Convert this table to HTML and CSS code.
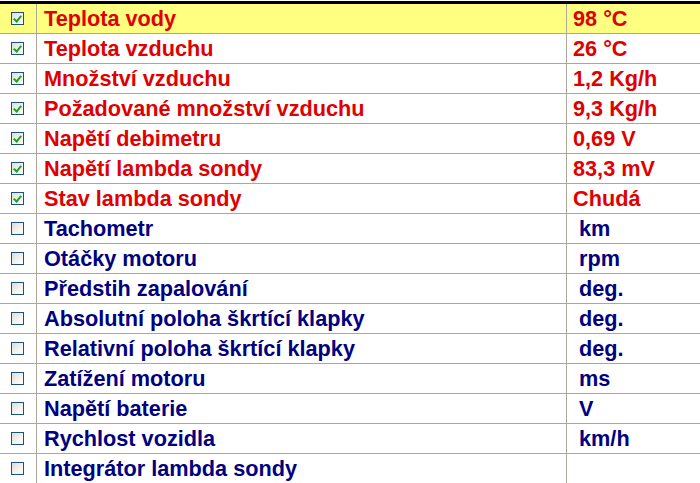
FILE: index.html
```html
<!DOCTYPE html>
<html>
<head>
<meta charset="utf-8">
<link rel="stylesheet" href="styles.css">
</head>
<body>
<div class="wrap">
<table class="grid">
  <tr class="row sel on"><td class="cb"><span class="box chk"></span></td><td class="name">Teplota vody</td><td class="val">98 °C</td></tr>
  <tr class="row on"><td class="cb"><span class="box chk"></span></td><td class="name">Teplota vzduchu</td><td class="val">26 °C</td></tr>
  <tr class="row on"><td class="cb"><span class="box chk"></span></td><td class="name">Množství vzduchu</td><td class="val">1,2 Kg/h</td></tr>
  <tr class="row on"><td class="cb"><span class="box chk"></span></td><td class="name">Požadované množství vzduchu</td><td class="val">9,3 Kg/h</td></tr>
  <tr class="row on"><td class="cb"><span class="box chk"></span></td><td class="name">Napětí debimetru</td><td class="val">0,69 V</td></tr>
  <tr class="row on"><td class="cb"><span class="box chk"></span></td><td class="name">Napětí lambda sondy</td><td class="val">83,3 mV</td></tr>
  <tr class="row on"><td class="cb"><span class="box chk"></span></td><td class="name">Stav lambda sondy</td><td class="val">Chudá</td></tr>
  <tr class="row off"><td class="cb"><span class="box"></span></td><td class="name">Tachometr</td><td class="val">&nbsp;km</td></tr>
  <tr class="row off"><td class="cb"><span class="box"></span></td><td class="name">Otáčky motoru</td><td class="val">&nbsp;rpm</td></tr>
  <tr class="row off"><td class="cb"><span class="box"></span></td><td class="name">Předstih zapalování</td><td class="val">&nbsp;deg.</td></tr>
  <tr class="row off"><td class="cb"><span class="box"></span></td><td class="name">Absolutní poloha škrtící klapky</td><td class="val">&nbsp;deg.</td></tr>
  <tr class="row off"><td class="cb"><span class="box"></span></td><td class="name">Relativní poloha škrtící klapky</td><td class="val">&nbsp;deg.</td></tr>
  <tr class="row off"><td class="cb"><span class="box"></span></td><td class="name">Zatížení motoru</td><td class="val">&nbsp;ms</td></tr>
  <tr class="row off"><td class="cb"><span class="box"></span></td><td class="name">Napětí baterie</td><td class="val">&nbsp;V</td></tr>
  <tr class="row off"><td class="cb"><span class="box"></span></td><td class="name">Rychlost vozidla</td><td class="val">&nbsp;km/h</td></tr>
  <tr class="row off"><td class="cb"><span class="box"></span></td><td class="name">Integrátor lambda sondy</td><td class="val"></td></tr>
</table>
</div>
</body>
</html>
```
FILE: styles.css
```css
html, body {
  margin: 0;
  padding: 0;
  background: #ffffff;
}
.wrap {
  width: 700px;
  height: 483px;
  overflow: hidden;
  padding-top: 1px;
  box-sizing: border-box;
}
.grid {
  width: 700px;
  border-collapse: collapse;
  border-top: 3px solid #000000;
  table-layout: fixed;
  font-family: "Liberation Sans", Arial, sans-serif;
  font-weight: bold;
  font-size: 21.7px;
}
.row td {
  height: 29px;
  padding: 0;
  border-bottom: 1px solid #aca899;
  white-space: nowrap;
  line-height: 28px;
  vertical-align: middle;
}
.row td.cb {
  width: 36px;
  border-right: 1px solid #aca899;
  text-align: left;
}
.row td.name {
  width: 522px;
  padding-left: 7px;
  border-right: 1px solid #aca899;
}
.row td.val {
  padding-left: 6px;
}
.sel td {
  background: #ffff80;
}
.on td {
  color: #e00000;
}
.off td {
  color: #000080;
}
.box {
  display: block;
  width: 11px;
  height: 11px;
  margin-left: 11px;
  border: 1px solid #1c5180;
  background: linear-gradient(135deg, #dcdcd7 0%, #f4f4f1 60%, #ffffff 100%);
  position: relative;
}
.box.chk::after {
  content: "";
  position: absolute;
  left: 3px;
  top: 1px;
  width: 3px;
  height: 6px;
  border: solid #21a121;
  border-width: 0 2px 2px 0;
  transform: rotate(40deg);
}
```
